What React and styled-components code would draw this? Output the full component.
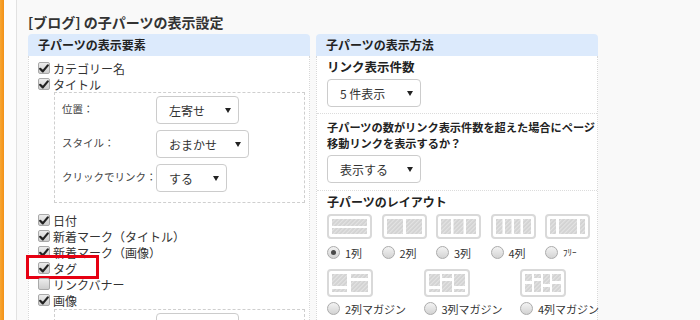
import React, { useId } from 'react';
import styled, { createGlobalStyle } from 'styled-components';

const Global = createGlobalStyle`
  html, body { margin: 0; padding: 0; background: #f9f9f9; }
  body {
    font-family: "Noto Sans CJK JP", "Noto Sans", sans-serif;
    color: #333;
    overflow: hidden;
  }
  * { box-sizing: border-box; }
`;

const Page = styled.div`
  display: flex;
  height: 320px;
  overflow: hidden;
`;

const Stripe = styled.div`
  width: 4px;
  flex: none;
  background: linear-gradient(to right, #f7a632, #f39117);
`;

const Gutter = styled.div`
  width: 13px;
  flex: none;
  background: #fdfdfd;
  border-right: 1px solid #e2e2e2;
`;

const Main = styled.main`
  flex: 1;
  padding: 12px 0 0 11px;
`;

const Title = styled.h1`
  margin: 0 0 2px;
  font-size: 14px;
  line-height: 20px;
  font-weight: bold;
  color: #333;
`;

const Columns = styled.div`
  display: grid;
  grid-template-columns: 282px 282px;
  column-gap: 6px;
  align-items: start;
`;

const Panel = styled.section`
  display: flex;
  flex-direction: column;
`;

const PanelHead = styled.div`
  height: 22px;
  background: #dceafc;
  border-radius: 4px 4px 0 0;
  padding-left: 10px;
  font-size: 12px;
  font-weight: bold;
  line-height: 22px;
  color: #222;
`;

const PanelBody = styled.div`
  background: #fff;
  border-left: 1px dotted #d8d8d8;
  border-right: 1px dotted #d8d8d8;
  padding: ${(p) => p.$pad || '0'};
  min-height: 300px;
`;

const CheckList = styled.div`
  display: flex;
  flex-direction: column;
  margin-top: ${(p) => p.$top || 0}px;
`;

const CheckItem = styled.label`
  position: relative;
  display: flex;
  align-items: center;
  gap: 3px;
  height: 16px;
  font-size: 12px;
  color: #333;
  white-space: nowrap;
`;

const Box = styled.span`
  width: 12px;
  height: 12px;
  flex: none;
  border: 1px solid #a9a9a9;
  border-radius: 2px;
  background: linear-gradient(#ececec, #cdcdcd);
  display: flex;
  align-items: center;
  justify-content: center;
`;

const Highlight = styled.span`
  position: absolute;
  left: -12px;
  top: -5px;
  width: 73px;
  height: 24px;
  border: 3px solid #e60012;
  pointer-events: none;
`;

const Sub = styled.div`
  margin: ${(p) => p.$margin || '0 0 0 16px'};
  border: 1px dashed #cfcfcf;
  padding: 3px 0 10px 7px;
  display: grid;
  grid-template-columns: 94px auto;
  row-gap: 6px;
  align-items: center;
  justify-items: start;
`;

const FieldLabel = styled.span`
  font-size: 10.5px;
  color: #444;
  margin-top: -4px;
  white-space: nowrap;
`;

const Select = styled.div`
  width: ${(p) => p.$w}px;
  height: 28px;
  border: 1px solid #cccccc;
  border-radius: 4px;
  background: #fff;
  display: flex;
  align-items: center;
  justify-content: space-between;
  padding: 0 7px 0 12px;
  font-size: 12px;
  color: #333;
  white-space: nowrap;
  &::after {
    content: '';
    border-left: 3px solid transparent;
    border-right: 3px solid transparent;
    border-top: 5px solid #222;
  }
`;

const Section = styled.div`
  padding: ${(p) => p.$pad};
  border-bottom: ${(p) => (p.$last ? 'none' : '1px dotted #dcdcdc')};
  display: flex;
  flex-direction: column;
  align-items: flex-start;
`;

const Heading = styled.div`
  font-size: ${(p) => p.$size || 12}px;
  font-weight: bold;
  line-height: 16px;
  color: #222;
  white-space: nowrap;
  margin-bottom: ${(p) => p.$mb ?? 4}px;
`;

const LayoutRow = styled.div`
  display: grid;
  grid-template-columns: repeat(${(p) => p.$cols}, ${(p) => p.$w}px);
  column-gap: ${(p) => p.$gap}px;
  margin-top: ${(p) => p.$top || 0}px;
`;

const LayoutItem = styled.div`
  display: flex;
  flex-direction: column;
  align-items: flex-start;
  gap: ${(p) => p.$gap}px;
`;

const RadioRow = styled.div`
  display: flex;
  align-items: center;
  gap: 5px;
  font-size: ${(p) => p.$size || 11}px;
  color: #333;
  white-space: nowrap;
  height: 13px;
`;

const Radio = styled.span`
  width: 13px;
  height: 13px;
  flex: none;
  border-radius: 50%;
  border: 1px solid #ababab;
  background: linear-gradient(#f3f3f3, #d3d3d3);
  display: flex;
  align-items: center;
  justify-content: center;
  &::after {
    content: '';
    width: 5px;
    height: 5px;
    border-radius: 50%;
    background: ${(p) => (p.$on ? '#4a4a4a' : 'transparent')};
  }
`;

const Check = ({ on }) => (
  <Box>
    {on && (
      <svg width="10" height="9" viewBox="0 0 10 9">
        <path d="M1.2 4.8 L3.8 7.4 L8.8 1.4" fill="none" stroke="#222" strokeWidth="2.2" strokeLinecap="round" strokeLinejoin="round" />
      </svg>
    )}
  </Box>
);

const LayoutIcon = ({ w, h, blocks }) => {
  const id = useId().replace(/:/g, '');
  return (
    <svg width={w} height={h} viewBox={`0 0 ${w} ${h}`}>
      <defs>
        <pattern id={id} width="3" height="3" patternUnits="userSpaceOnUse" patternTransform="rotate(45)">
          <rect width="3" height="3" fill="#d2d2d2" />
          <rect width="1.2" height="3" fill="#e3e3e3" />
        </pattern>
      </defs>
      <rect x="1" y="1" width={w - 2} height={h - 2} rx="3" fill="#fff" stroke="#d9d9d9" strokeWidth="2" />
      {blocks.map(([x, y, bw, bh], i) => (
        <rect key={i} x={x} y={y} width={bw} height={bh} fill={`url(#${id})`} />
      ))}
    </svg>
  );
};

const row1 = [
  { label: '1列', on: true, blocks: [[5, 5, 35, 7], [5, 14, 35, 6]] },
  { label: '2列', blocks: [[5, 5, 16, 15], [24, 5, 16, 15]] },
  { label: '3列', blocks: [[5, 5, 10, 15], [17.5, 5, 10, 15], [30, 5, 10, 15]] },
  { label: '4列', blocks: [[5, 5, 6.5, 15], [14, 5, 6.5, 15], [23, 5, 6.5, 15], [32, 5, 8, 15]] },
  { label: 'ﾌﾘｰ', small: true, blocks: [[5, 5, 6, 15], [14, 5, 18, 15], [35, 5, 5, 15]] },
];

const row2 = [
  { label: '2列マガジン', blocks: [[5, 5, 15, 12], [5, 20, 15, 3], [24, 5, 17, 4], [24, 12, 17, 11]] },
  {
    label: '3列マガジン',
    blocks: [[5, 5, 11, 12], [5, 20, 11, 3], [18, 5, 10, 4], [18, 12, 10, 11], [30, 5, 11, 12], [30, 20, 11, 3]],
  },
  {
    label: '4列マガジン',
    blocks: [
      [5, 5, 7, 7], [5, 15, 7, 8],
      [14, 5, 7, 4], [14, 12, 7, 11],
      [23, 5, 7, 10], [23, 18, 7, 5],
      [32, 5, 9, 7], [32, 15, 9, 8],
    ],
  },
];

export default function App() {
  return (
    <>
      <Global />
      <Page>
        <Stripe />
        <Gutter />
        <Main>
          <Title>[ブログ] の子パーツの表示設定</Title>
          <Columns>
            <Panel>
              <PanelHead>子パーツの表示要素</PanelHead>
              <PanelBody $pad="4px 4px 0 9px">
                <CheckList>
                  <CheckItem><Check on />カテゴリー名</CheckItem>
                  <CheckItem><Check on />タイトル</CheckItem>
                </CheckList>
                <Sub>
                  <FieldLabel>位置：</FieldLabel>
                  <Select $w={83}>左寄せ</Select>
                  <FieldLabel>スタイル：</FieldLabel>
                  <Select $w={93}>おまかせ</Select>
                  <FieldLabel>クリックでリンク：</FieldLabel>
                  <Select $w={71}>する</Select>
                </Sub>
                <CheckList $top={9}>
                  <CheckItem><Check on />日付</CheckItem>
                  <CheckItem><Check on />新着マーク（タイトル）</CheckItem>
                  <CheckItem><Check on />新着マーク（画像）</CheckItem>
                  <CheckItem>
                    <Check on />タグ
                    <Highlight />
                  </CheckItem>
                  <CheckItem><Check />リンクバナー</CheckItem>
                  <CheckItem><Check on />画像</CheckItem>
                </CheckList>
                <Sub $margin="1px 0 0 16px">
                  <FieldLabel />
                  <Select $w={83} />
                </Sub>
              </PanelBody>
            </Panel>
            <Panel>
              <PanelHead>子パーツの表示方法</PanelHead>
              <PanelBody>
                <Section $pad="3px 0 6px 10px">
                  <Heading $size={12.5}>リンク表示件数</Heading>
                  <Select $w={94}>5 件表示</Select>
                </Section>
                <Section $pad="5px 0 7px 10px">
                  <Heading $size={11.2}>
                    子パーツの数がリンク表示件数を超えた場合にページ
                    <br />
                    移動リンクを表示するか？
                  </Heading>
                  <Select $w={94}>表示する</Select>
                </Section>
                <Section $pad="3px 0 0 10px" $last>
                  <Heading $size={12}>子パーツのレイアウト</Heading>
                  <LayoutRow $cols={5} $w={45} $gap={9.5}>
                    {row1.map((it) => (
                      <LayoutItem key={it.label} $gap={7}>
                        <LayoutIcon w={45} h={25} blocks={it.blocks} />
                        <RadioRow $size={it.small ? 9 : 11}>
                          <Radio $on={it.on} />
                          {it.label}
                        </RadioRow>
                      </LayoutItem>
                    ))}
                  </LayoutRow>
                  <LayoutRow $cols={3} $w={46} $gap={50.5} $top={10}>
                    {row2.map((it) => (
                      <LayoutItem key={it.label} $gap={5}>
                        <LayoutIcon w={46} h={28} blocks={it.blocks} />
                        <RadioRow>
                          <Radio />
                          {it.label}
                        </RadioRow>
                      </LayoutItem>
                    ))}
                  </LayoutRow>
                </Section>
              </PanelBody>
            </Panel>
          </Columns>
        </Main>
      </Page>
    </>
  );
}
